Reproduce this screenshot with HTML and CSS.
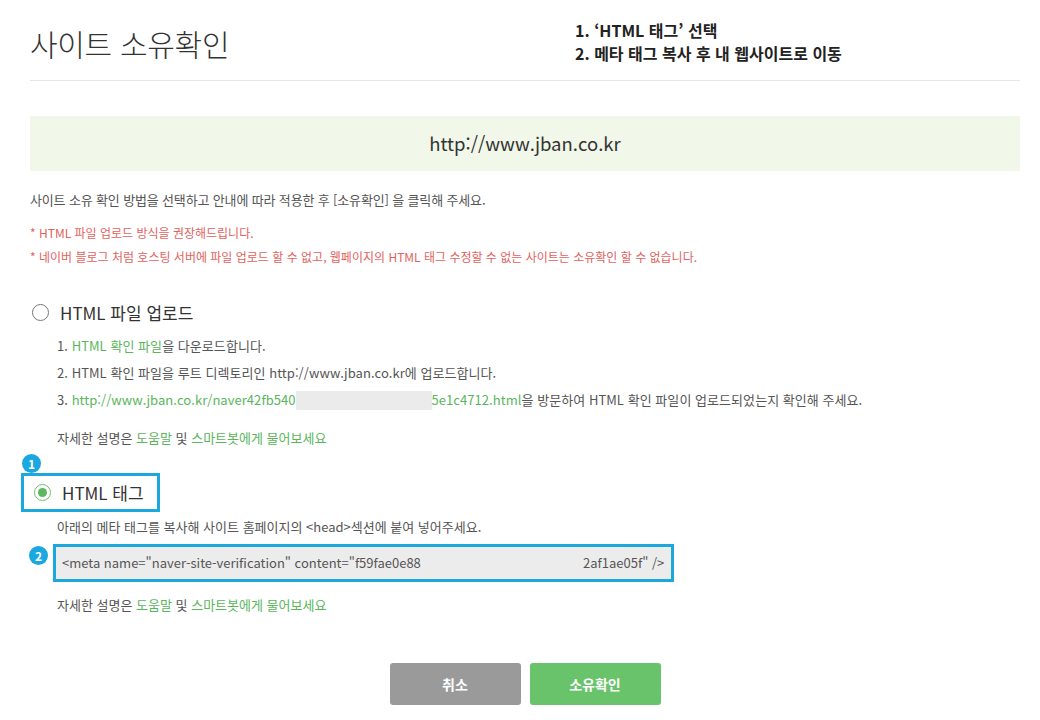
FILE: index.html
```
<!DOCTYPE html>
<html lang="ko">
<head>
    <meta charset="UTF-8">
    <title>사이트 소유확인</title>
    <link rel="stylesheet" href="styles.css">
</head>
<body>
    <div class="page">
        <div class="header">
            <h1 class="title">사이트 소유확인</h1>
            <div class="guide">
                <div>1. ‘HTML 태그’ 선택</div>
                <div>2. 메타 태그 복사 후 내 웹사이트로 이동</div>
            </div>
        </div>

        <div class="site-url">http://www.jban.co.kr</div>

        <p class="desc">사이트 소유 확인 방법을 선택하고 안내에 따라 적용한 후 [소유확인] 을 클릭해 주세요.</p>
        <ul class="notice">
            <li>* HTML 파일 업로드 방식을 권장해드립니다.</li>
            <li>* 네이버 블로그 처럼 호스팅 서버에 파일 업로드 할 수 없고, 웹페이지의 HTML 태그 수정할 수 없는 사이트는 소유확인 할 수 없습니다.</li>
        </ul>

        <div class="option">
            <label class="radio-row">
                <span class="radio"></span>
                <span class="radio-label">HTML 파일 업로드</span>
            </label>
            <ol class="steps">
                <li>1. <a class="link">HTML 확인 파일</a>을 다운로드합니다.</li>
                <li>2. HTML 확인 파일을 루트 디렉토리인 http://www.jban.co.kr에 업로드합니다.</li>
                <li>3. <a class="link">http://www.jban.co.kr/naver42fb540<span class="masked"></span>5e1c4712.html</a>을 방문하여 HTML 확인 파일이 업로드되었는지 확인해 주세요.</li>
            </ol>
            <p class="help">자세한 설명은 <a class="link">도움말</a> 및 <a class="link">스마트봇에게 물어보세요</a></p>
        </div>

        <div class="option option-tag">
            <span class="badge badge-one">1</span>
            <label class="radio-row marked">
                <span class="radio checked"></span>
                <span class="radio-label">HTML 태그</span>
            </label>
            <p class="tag-desc">아래의 메타 태그를 복사해 사이트 홈페이지의 &lt;head&gt;섹션에 붙여 넣어주세요.</p>
            <div class="meta-box">
                <span class="badge badge-two">2</span>
                <div class="meta-field"><span class="meta-left">&lt;meta name="naver-site-verification" content="f59fae0e88</span><span class="meta-gap"></span><span class="meta-right">2af1ae05f" /&gt;</span></div>
            </div>
            <p class="help">자세한 설명은 <a class="link">도움말</a> 및 <a class="link">스마트봇에게 물어보세요</a></p>
        </div>

        <div class="buttons">
            <button class="btn btn-cancel">취소</button>
            <button class="btn btn-ok">소유확인</button>
        </div>
    </div>
</body>
</html>
```

FILE: styles.css
```
body {
    margin: 0;
    background: #fff;
    font-family: "Noto Sans CJK KR", "Noto Sans", sans-serif;
    color: #555;
}
.page {
    width: 990px;
    padding: 0 20px 0 30px;
}
.header {
    display: flex;
    height: 80px;
    border-bottom: 1px solid #e6e6e6;
}
.title {
    width: 545px;
    margin: 0;
    padding-top: 23px;
    font-size: 30px;
    font-weight: 300;
    line-height: 40px;
    color: #333;
    letter-spacing: -0.3px;
}
.guide {
    padding-top: 19px;
    font-size: 16px;
    font-weight: 700;
    line-height: 23px;
    color: #222;
}
.site-url {
    margin-top: 35px;
    height: 55px;
    line-height: 55px;
    background: #f1f7e9;
    text-align: center;
    font-size: 18.5px;
    color: #333;
}
.desc {
    margin: 19px 0 0;
    font-size: 13px;
    line-height: 20px;
    letter-spacing: -0.15px;
}
.notice {
    list-style: none;
    margin: 11px 0 0;
    padding: 0;
    font-size: 12px;
    line-height: 24px;
    color: #e2625e;
}
.option {
    position: relative;
}
.radio-row {
    display: flex;
    align-items: center;
    height: 24px;
    margin-top: 31px;
    margin-left: 2px;
}
.radio {
    width: 15px;
    height: 15px;
    border: 1.5px solid #777;
    border-radius: 50%;
    margin-right: 11px;
    box-sizing: content-box;
    display: flex;
    align-items: center;
    justify-content: center;
}
.radio.checked {
    border-color: #6cc06c;
}
.radio.checked::after {
    content: "";
    width: 9px;
    height: 9px;
    border-radius: 50%;
    background: #5cb85c;
}
.radio-label {
    font-size: 17px;
    color: #333;
}
.steps {
    list-style: none;
    margin: 8px 0 0;
    padding: 0 0 0 27px;
    font-size: 13px;
    line-height: 27px;
    letter-spacing: 0.05px;
}
.link {
    color: #5ab65d;
    text-decoration: none;
}
.masked {
    display: inline-block;
    width: 136px;
    height: 19px;
    vertical-align: -5px;
    background: #ebebeb;
}
.help {
    margin: 11px 0 0;
    padding-left: 27px;
    font-size: 13px;
    line-height: 27px;
}
.badge {
    position: absolute;
    width: 19px;
    height: 19px;
    border-radius: 50%;
    background: #1ba7df;
    color: #fff;
    font-size: 12px;
    font-weight: 700;
    line-height: 19px;
    text-align: center;
}
.badge-one {
    left: -8px;
    top: 3px;
}
.marked {
    display: inline-flex;
    height: 33px;
    margin: 22px 0 0 -9px;
    padding: 0 13px 0 10px;
    border: 3px solid #1ca8dd;
}
.tag-desc {
    margin: 1px 0 0;
    padding-left: 27px;
    font-size: 13px;
    line-height: 27px;
}
.meta-box {
    position: relative;
    width: 615px;
    margin: 4px 0 0 23px;
    border: 3px solid #1ca8dd;
}
.badge-two {
    left: -27px;
    top: -1px;
}
.meta-field {
    display: flex;
    height: 32px;
    line-height: 32px;
    padding-left: 6px;
    background: #ececec;
    font-size: 13px;
    color: #555;
    white-space: nowrap;
    overflow: hidden;
}
.meta-left {
    width: 360px;
    overflow: hidden;
}
.meta-gap {
    width: 161px;
}
.option-tag .help {
    margin-top: 9px;
}
.buttons {
    display: flex;
    justify-content: center;
    gap: 9px;
    margin-top: 45px;
}
.btn {
    width: 131px;
    height: 42px;
    border: none;
    border-radius: 3px;
    color: #fff;
    font-family: "Noto Sans CJK KR", sans-serif;
    font-size: 14px;
    font-weight: 700;
    cursor: pointer;
}
.btn-cancel {
    background: #9a9a9a;
}
.btn-ok {
    background: #68c36a;
}
```
